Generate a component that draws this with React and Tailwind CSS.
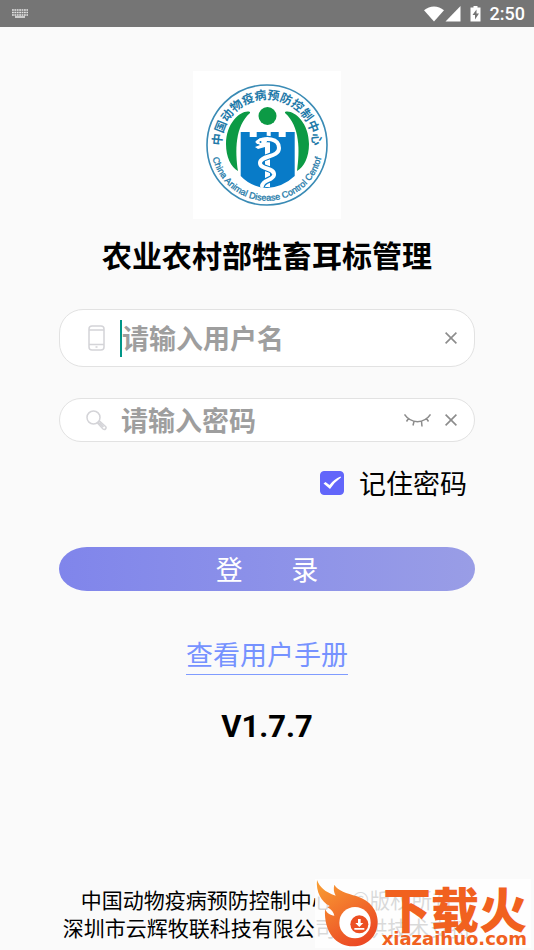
import { useState } from 'react';

function StatusBar() {
  return (
    <header className="flex h-[27px] items-center justify-between bg-[#757575] pr-[9px] pl-3 text-white">
      <svg className="h-[9px] w-4" viewBox="0 0 16 9" fill="none" stroke="#e4e4e4">
        <path d="M0 1h16M0 3.5h16M0 6h16" strokeWidth="1.6" strokeDasharray="1.8 .6" />
        <path d="M3 8h10" strokeWidth="1.6" />
      </svg>
      <div className="flex items-center">
        <svg className="h-4 w-[58px]" viewBox="0 0 58 16" fill="currentColor">
          <path d="M0 4.2C5.8-.9 14.2-.9 20 4.2L10 15.5z" />
          <path d="M36.5 0v15.5H21.5z" />
          <path d="M49.5 0h4v1.5h3V15.5h-10V1.5h3z" />
          <path d="M52.5 3.500L48.5 9h2.5v4.500l4-6h-2.500z" fill="#757575" />
        </svg>
        <span className="ml-2 font-['Roboto',sans-serif] text-lg leading-none font-medium">2:50</span>
      </div>
    </header>
  );
}

function Seal() {
  return (
    <svg className="size-[148px] bg-white" viewBox="0 0 148 148" role="img" aria-label="中国动物疫病预防控制中心">
      <defs>
        <path id="sealTop" d="M29.2 81.9A45.5 45.5 0 1 1 118.8 81.9" />
        <path id="sealBottom" d="M18.2 74A55.8 55.8 0 0 0 129.8 74" />
      </defs>
      <circle cx="74" cy="74" r="60" fill="#fff" stroke="#3a8bb5" strokeWidth="1.6" />
      <text className="font-['Noto_Sans_CJK_SC',sans-serif] text-[12px] font-bold" fill="#2279a8" textAnchor="middle">
        <textPath href="#sealTop" startOffset="50%">中国动物疫病预防控制中心</textPath>
      </text>
      <text className="font-['Liberation_Sans',sans-serif] text-[9px]" fill="#2279a8" stroke="#2279a8" strokeWidth=".3" textAnchor="middle">
        <textPath href="#sealBottom" startOffset="50%">China Animal Disease Control Centof</textPath>
      </text>
      <circle cx="74.5" cy="45" r="9" fill="#0c9a45" />
      <path d="M57 41C50 38 33 50 33 73C33 86 38 96 45 100C42 80 42 55 57 42z" fill="#0c9a45" />
      <path d="M92 41C99 38 116 50 116 73C116 86 111 96 104 100C107 80 107 55 92 42z" fill="#0c9a45" />
      <path d="M47.7 61h9v5h7v-5h10v5h4v-5h8v5h7v-5h9v44Q90 116 74 117Q58 116 47.7 105z" fill="#087bc8" />
      <path d="M72 66h5v50h-5z" fill="#fff" />
      <path
        d="M65 71C72 66 86 67 86 77C86 87 67 84 67 92C67 99 82 96 81 104C80 110 70 108 69 115"
        fill="none"
        stroke="#087bc8"
        strokeWidth="6.5"
      />
      <path
        d="M65 71C72 66 86 67 86 77C86 87 67 84 67 92C67 99 82 96 81 104C80 110 70 108 69 115"
        fill="none"
        stroke="#fff"
        strokeWidth="4"
        strokeLinecap="round"
      />
      <path d="M62 71l5-4 7 3-2 6-7 2-3-2 5-2z" fill="#fff" />
      <circle cx="67.5" cy="71" r="1" fill="#087bc8" />
    </svg>
  );
}

function ClearButton({ label, onClick }) {
  return (
    <button type="button" aria-label={label} onClick={onClick} className="shrink-0">
      <svg className="size-3" viewBox="0 0 12 12" fill="none" stroke="#8c8c8c" strokeWidth="1.6">
        <path d="M.6.6l10.8 10.8M11.4.6L.6 11.4" />
      </svg>
    </button>
  );
}

function Watermark() {
  return (
    <div className="absolute right-[3px] bottom-0.5 flex h-[69px] w-[216px] justify-between bg-white/85 pr-1 text-[#f1611f]">
      <svg className="h-[69px] w-16 shrink-0" viewBox="46 27 192 207">
        <defs>
          <linearGradient id="flame" x1="0" y1="0" x2=".6" y2="1">
            <stop offset="0" stopColor="#f9a034" />
            <stop offset="1" stopColor="#ec4a24" />
          </linearGradient>
        </defs>
        <path
          d="M52 30C60 52 75 65 108 77C102 66 101 56 104 44C115 63 140 69 172 79C212 92 234 122 234 155C234 200 200 229 160 229C112 229 72 190 76 117C82 130 92 136 104 137C102 127 96 119 83 112L90 108C65 96 48 64 52 30z"
          fill="url(#flame)"
        />
        <circle cx="166" cy="158" r="47" fill="#fff" />
        <circle cx="179" cy="163" r="27" fill="#ec4f22" />
        <path d="M175 147h8v12h8l-12 12-12-12h8zM164 174h30v5h-30z" fill="#fff" />
      </svg>
      <div className="flex flex-col items-end pt-1">
        <span className="font-['Noto_Sans_CJK_SC',sans-serif] text-[48px] leading-[48px] font-black whitespace-nowrap">
          下载火
        </span>
        <span className="font-['DejaVu_Sans',sans-serif] text-lg leading-4 font-bold">xiazaihuo.com</span>
      </div>
    </div>
  );
}

const fieldClass =
  'min-w-0 flex-1 bg-transparent text-[27px] font-bold text-black outline-none placeholder:text-[#9e9e9e] placeholder:opacity-100';

export default function App() {
  const [username, setUsername] = useState('');
  const [password, setPassword] = useState('');
  const [visible, setVisible] = useState(false);
  const [remember, setRemember] = useState(true);

  return (
    <div className="relative flex min-h-screen flex-col bg-[#fafafa] font-['Noto_Sans_CJK_SC',sans-serif] text-black">
      <StatusBar />

      <main className="flex flex-col items-center px-[59px] pt-11">
        <Seal />
        <h1 className="mt-[15px] text-[30px] leading-10 font-bold whitespace-nowrap">农业农村部牲畜耳标管理</h1>

        <form className="mt-[35px] w-full" onSubmit={(e) => e.preventDefault()}>
          {/* Username */}
          <div className="flex h-[58px] items-center rounded-3xl border border-[#e2e2e2] bg-white pr-[17px] pl-7">
            <svg className="h-[26px] w-[17px] shrink-0" viewBox="0 0 17 26" fill="none" stroke="#d4d4d8" strokeWidth="1.5">
              <rect x="1" y="1" width="15" height="24" rx="3" />
              <path d="M1 5h15M1 19.500h15M7.500 22h2" />
            </svg>
            <span className="ml-[15px] h-[37px] w-0.5 shrink-0 bg-[#009688]" />
            <input
              type="text"
              aria-label="用户名"
              placeholder="请输入用户名"
              value={username}
              onChange={(e) => setUsername(e.target.value)}
              className={fieldClass}
            />
            <ClearButton label="清除用户名" onClick={() => setUsername('')} />
          </div>

          {/* Password */}
          <div className="mt-[31px] flex h-11 items-center rounded-full border border-[#e2e2e2] bg-white pr-[17px] pl-[26px]">
            <svg className="size-[21px] shrink-0" viewBox="0 0 21 21" fill="none" stroke="#d4d4d8" strokeWidth="1.5">
              <circle cx="7.5" cy="7.5" r="6.5" />
              <path d="M11.500 13l2-2 6 5.500c1.500 1.500-.5 4-2.500 2.500zM12.500 12l5 5" />
            </svg>
            <input
              type={visible ? 'text' : 'password'}
              aria-label="密码"
              placeholder="请输入密码"
              value={password}
              onChange={(e) => setPassword(e.target.value)}
              className={`${fieldClass} ml-3.5`}
            />
            <button type="button" aria-label="显示密码" onClick={() => setVisible(!visible)} className="mr-3.5 shrink-0">
              <svg className="h-[13px] w-[27px]" viewBox="0 0 27 13" fill="none" stroke="#8c8c8c" strokeWidth="1.5">
                <path d="M.5.5C7 10 20 10 26.5.5M4.500 4.500L2.500 7.500M10 7.500L9 11.500M17.500 7.500l.5 5M22.500 4.500l2 3" />
              </svg>
            </button>
            <ClearButton label="清除密码" onClick={() => setPassword('')} />
          </div>

          {/* Remember me */}
          <label className="mt-[21px] flex items-center justify-end gap-[15px] pr-2 text-[27px] leading-10">
            <span className="grid size-6">
              <input
                type="checkbox"
                checked={remember}
                onChange={(e) => setRemember(e.target.checked)}
                className="col-start-1 row-start-1 size-6 appearance-none rounded-sm border border-[#6266fa] checked:bg-[#6266fa]"
              />
              {remember && (
                <svg className="pointer-events-none col-start-1 row-start-1 size-6" viewBox="0 0 24 24">
                  <path d="M3.500 12.500l2-1.500 4 3Q14 8 20.500 5.500l.5 1Q14.500 11 10 18z" fill="#fff" />
                </svg>
              )}
            </span>
            记住密码
          </label>

          <button
            type="submit"
            className="mt-11 h-11 w-full rounded-[28px/22px] bg-linear-to-r from-[#8085eb] to-[#999de6] text-[27px] leading-10 whitespace-pre text-white"
          >
            {'登        录'}
          </button>
        </form>

        <a href="#manual" className="mt-[43px] border-b border-b-[#7f9bff] text-[27px] leading-10 text-[#7692ff]">
          查看用户手册
        </a>
        <p className="mt-8 font-['Roboto',sans-serif] text-[31px] leading-10 font-bold">V1.7.7</p>
      </main>

      <footer className="mt-auto overflow-hidden pt-8 pb-[9px] text-center text-[21px] leading-7 whitespace-pre">
        <p>{'中国动物疫病预防控制中心    ©版权所有'}</p>
        <p>{'深圳市云辉牧联科技有限公司  提供技术支持'}</p>
      </footer>

      <Watermark />
    </div>
  );
}
